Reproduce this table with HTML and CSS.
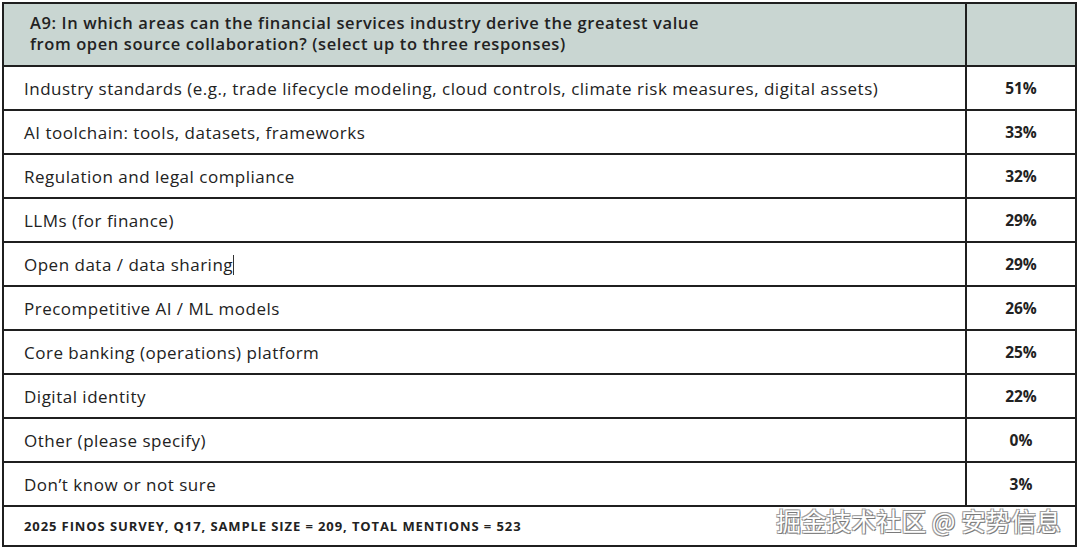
FILE: index.html
```html
<!DOCTYPE html>
<html>
<head>
<meta charset="utf-8">
<link rel="stylesheet" href="styles.css">
</head>
<body>
<div class="wrap">
<table class="survey">
  <thead>
    <tr class="head">
      <th class="q">A9: In which areas can the financial services industry derive the greatest value<br>from open source collaboration? (select up to three responses)</th>
      <th class="pct-h"></th>
    </tr>
  </thead>
  <tbody>
    <tr><td class="label">Industry standards (e.g., trade lifecycle modeling, cloud controls, climate risk measures, digital assets)</td><td class="pct">51%</td></tr>
    <tr><td class="label">AI toolchain: tools, datasets, frameworks</td><td class="pct">33%</td></tr>
    <tr><td class="label">Regulation and legal compliance</td><td class="pct">32%</td></tr>
    <tr><td class="label">LLMs (for finance)</td><td class="pct">29%</td></tr>
    <tr><td class="label">Open data / data sharing<span class="caret"></span></td><td class="pct">29%</td></tr>
    <tr><td class="label">Precompetitive AI / ML models</td><td class="pct">26%</td></tr>
    <tr><td class="label">Core banking (operations) platform</td><td class="pct">25%</td></tr>
    <tr><td class="label">Digital identity</td><td class="pct">22%</td></tr>
    <tr><td class="label">Other (please specify)</td><td class="pct">0%</td></tr>
    <tr><td class="label">Don’t know or not sure</td><td class="pct">3%</td></tr>
    <tr class="foot"><td colspan="2" class="source">2025 FINOS SURVEY, Q17, SAMPLE SIZE = 209, TOTAL MENTIONS = 523<span class="mark">掘金技术社区 @ 安势信息</span></td></tr>
  </tbody>
</table>
</div>
</body>
</html>
```
FILE: styles.css
```css
html, body {
  margin: 0;
  padding: 0;
  background: #ffffff;
}
.wrap {
  padding: 2px 0 0 2px;
}
.survey {
  width: 1075px;
  border-collapse: collapse;
  border: 2px solid #1f1f1f;
  font-family: "Open Sans", "Liberation Sans", sans-serif;
  color: #222222;
  table-layout: fixed;
}
.survey th, .survey td {
  border: 2px solid #1f1f1f;
  padding: 0;
}
.head th {
  background: #c9d6d2;
  height: 58px;
}
.q {
  text-align: left;
  font-weight: 600;
  font-size: 16.5px;
  line-height: 21px;
  letter-spacing: 0.6px;
  padding-left: 26px !important;
  padding-bottom: 3px !important;
}
.pct-h {
  width: 108px;
}
.label {
  height: 42px;
  font-size: 17px;
  padding-left: 20px !important;
  position: relative;
  letter-spacing: 0.5px;
}
.pct {
  text-align: center;
  font-weight: 700;
  font-size: 15.5px;
}
.caret {
  display: inline-block;
  width: 1px;
  height: 20px;
  background: #333;
  vertical-align: -4px;
}
.foot td {
  height: 37px;
  position: relative;
}
.source {
  font-size: 13px;
  font-weight: 700;
  letter-spacing: 0.9px;
  padding-left: 20px !important;
  padding-bottom: 1px !important;
}
.mark {
  position: absolute;
  right: 14px;
  top: -5px;
  font-family: "Noto Sans CJK SC", sans-serif;
  font-size: 25px;
  font-weight: 400;
  letter-spacing: 0;
  color: #ffffff;
  text-shadow: 1px 1px 0 #7a7a7a, -1px -1px 0 #a0a0a0, 1px -1px 0 #a0a0a0, -1px 1px 0 #a0a0a0;
}
```
